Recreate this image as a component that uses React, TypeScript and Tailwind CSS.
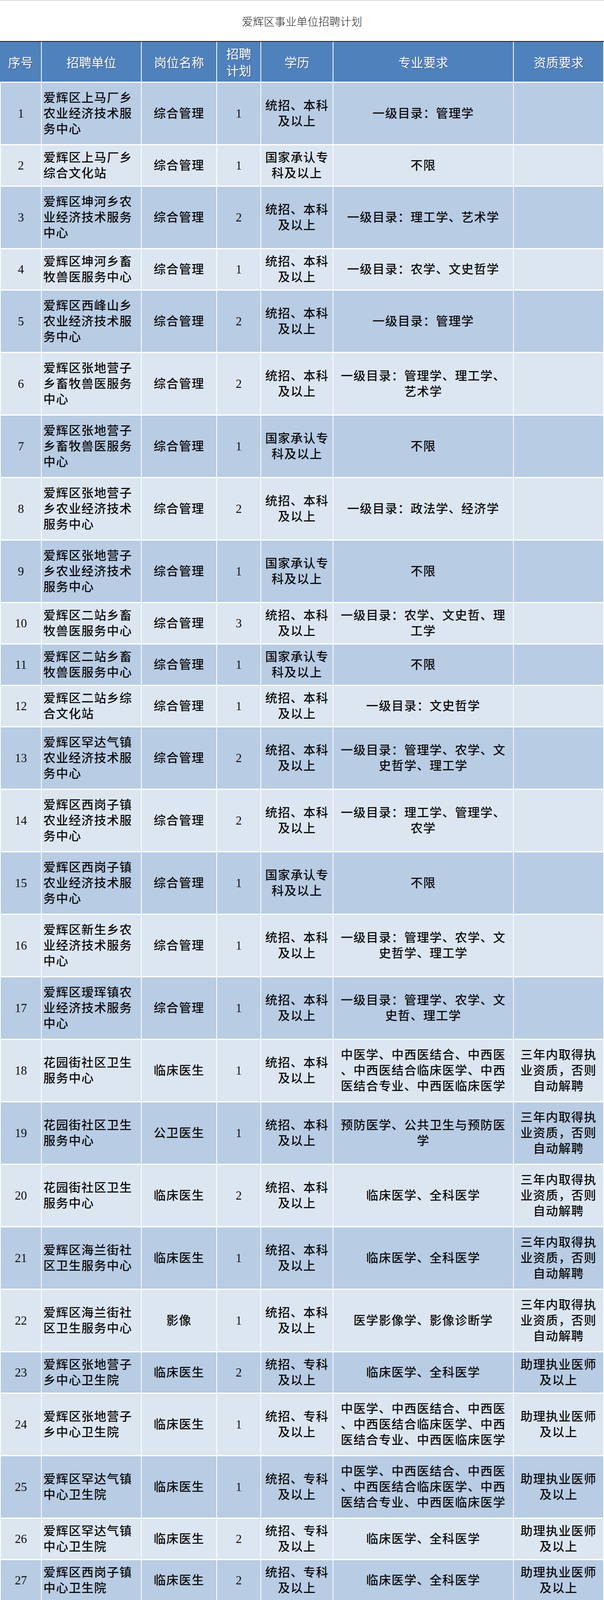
import React from "react";

type Row = {
  unit: string;
  post: string;
  num: number;
  edu: string[];
  major: string[];
  qual?: string[];
};

const BK = ["统招、本科", "及以上"];
const GJ = ["国家承认专", "科及以上"];
const ZK = ["统招、专科", "及以上"];
const ZY = ["中医学、中西医结合、中西医", "、中西医结合临床医学、中西", "医结合专业、中西医临床医学"];
const SN = ["三年内取得执", "业资质，否则", "自动解聘"];
const ZL = ["助理执业医师", "及以上"];
const LC = ["临床医学、全科医学"];

const rows: Row[] = [
  { unit: "爱辉区上马厂乡农业经济技术服务中心", post: "综合管理", num: 1, edu: BK, major: ["一级目录：管理学"] },
  { unit: "爱辉区上马厂乡综合文化站", post: "综合管理", num: 1, edu: GJ, major: ["不限"] },
  { unit: "爱辉区坤河乡农业经济技术服务中心", post: "综合管理", num: 2, edu: BK, major: ["一级目录：理工学、艺术学"] },
  { unit: "爱辉区坤河乡畜牧兽医服务中心", post: "综合管理", num: 1, edu: BK, major: ["一级目录：农学、文史哲学"] },
  { unit: "爱辉区西峰山乡农业经济技术服务中心", post: "综合管理", num: 2, edu: BK, major: ["一级目录：管理学"] },
  { unit: "爱辉区张地营子乡畜牧兽医服务中心", post: "综合管理", num: 2, edu: BK, major: ["一级目录：管理学、理工学、", "艺术学"] },
  { unit: "爱辉区张地营子乡畜牧兽医服务中心", post: "综合管理", num: 1, edu: GJ, major: ["不限"] },
  { unit: "爱辉区张地营子乡农业经济技术服务中心", post: "综合管理", num: 2, edu: BK, major: ["一级目录：政法学、经济学"] },
  { unit: "爱辉区张地营子乡农业经济技术服务中心", post: "综合管理", num: 1, edu: GJ, major: ["不限"] },
  { unit: "爱辉区二站乡畜牧兽医服务中心", post: "综合管理", num: 3, edu: BK, major: ["一级目录：农学、文史哲、理", "工学"] },
  { unit: "爱辉区二站乡畜牧兽医服务中心", post: "综合管理", num: 1, edu: GJ, major: ["不限"] },
  { unit: "爱辉区二站乡综合文化站", post: "综合管理", num: 1, edu: BK, major: ["一级目录：文史哲学"] },
  { unit: "爱辉区罕达气镇农业经济技术服务中心", post: "综合管理", num: 2, edu: BK, major: ["一级目录：管理学、农学、文", "史哲学、理工学"] },
  { unit: "爱辉区西岗子镇农业经济技术服务中心", post: "综合管理", num: 2, edu: BK, major: ["一级目录：理工学、管理学、", "农学"] },
  { unit: "爱辉区西岗子镇农业经济技术服务中心", post: "综合管理", num: 1, edu: GJ, major: ["不限"] },
  { unit: "爱辉区新生乡农业经济技术服务中心", post: "综合管理", num: 1, edu: BK, major: ["一级目录：管理学、农学、文", "史哲学、理工学"] },
  { unit: "爱辉区瑷珲镇农业经济技术服务中心", post: "综合管理", num: 1, edu: BK, major: ["一级目录：管理学、农学、文", "史哲、理工学"] },
  { unit: "花园街社区卫生服务中心", post: "临床医生", num: 1, edu: BK, major: ZY, qual: SN },
  { unit: "花园街社区卫生服务中心", post: "公卫医生", num: 1, edu: BK, major: ["预防医学、公共卫生与预防医", "学"], qual: SN },
  { unit: "花园街社区卫生服务中心", post: "临床医生", num: 2, edu: BK, major: LC, qual: SN },
  { unit: "爱辉区海兰街社区卫生服务中心", post: "临床医生", num: 1, edu: BK, major: LC, qual: SN },
  { unit: "爱辉区海兰街社区卫生服务中心", post: "影像", num: 1, edu: BK, major: ["医学影像学、影像诊断学"], qual: SN },
  { unit: "爱辉区张地营子乡中心卫生院", post: "临床医生", num: 2, edu: ZK, major: LC, qual: ZL },
  { unit: "爱辉区张地营子乡中心卫生院", post: "临床医生", num: 1, edu: ZK, major: ZY, qual: ZL },
  { unit: "爱辉区罕达气镇中心卫生院", post: "临床医生", num: 1, edu: ZK, major: ZY, qual: ZL },
  { unit: "爱辉区罕达气镇中心卫生院", post: "临床医生", num: 2, edu: ZK, major: LC, qual: ZL },
  { unit: "爱辉区西岗子镇中心卫生院", post: "临床医生", num: 2, edu: ZK, major: LC, qual: ZL },
  { unit: "爱辉区西岗子镇中心卫生院", post: "药剂", num: 1, edu: BK, major: ["药学、临床药学"] },
];

// unit names wrap every 7 characters in the sheet
function chunk(s: string, n: number) {
  const out: string[] = [];
  for (let i = 0; i < s.length; i += n) out.push(s.slice(i, i + n));
  return out;
}

function Lines({ lines }: { lines: string[] }) {
  return (
    <div>
      {lines.map((l, i) => (
        <div key={i} className="whitespace-nowrap">{l}</div>
      ))}
    </div>
  );
}

const cell = "flex items-center justify-center border-r-2 border-white text-center";

export default function App() {
  return (
    <div className="w-[1547px] bg-white text-[#0d0d0d] font-['Liberation_Serif','Noto_Sans_CJK_SC',serif]">
      <div className="flex h-[105px] items-center justify-center border-t-2 border-[#dcdcdc] font-['Noto_Sans_CJK_SC',sans-serif] text-[28px] font-light text-[#2a2a2a]">
        爱辉区事业单位招聘计划
      </div>

      <div className="flex h-[107px] border-t-2 border-b-[3px] border-t-[#1e1e1e] border-b-white bg-[#4f81bd] font-['Noto_Sans_CJK_SC',sans-serif] text-[32px] leading-[43px] text-white [text-shadow:1px_1px_1px_rgba(0,0,0,0.45)]">
        <div className={`${cell} w-[107px]`}>序号</div>
        <div className={`${cell} w-[256px]`}>招聘单位</div>
        <div className={`${cell} w-[193px]`}>岗位名称</div>
        <div className={`${cell} w-[113px]`}><Lines lines={["招聘", "计划"]} /></div>
        <div className={`${cell} w-[185px]`}>学历</div>
        <div className={`${cell} w-[462px]`}>专业要求</div>
        <div className={`${cell} w-[231px] border-r-0`}>资质要求</div>
      </div>

      {rows.map((r, i) => {
        const unit = chunk(r.unit, 7);
        const tall = Math.max(unit.length, r.major.length, r.qual?.length ?? 0) >= 3;
        return (
          <div
            key={i}
            className={`flex border-b-[3px] border-white text-[31px] font-medium leading-[40px] tracking-[1.5px] ${tall ? "h-[160px]" : "h-[106px]"} ${i % 2 === 0 ? "bg-[#b8cce4]" : "bg-[#dce6f1]"}`}
          >
            <div className={`${cell} w-[107px] border-l-2 font-normal tracking-normal`}>{i + 1}</div>
            <div className="flex w-[256px] items-center border-r-2 border-white pl-[4px]"><Lines lines={unit} /></div>
            <div className={`${cell} w-[193px]`}>{r.post}</div>
            <div className={`${cell} w-[113px] font-normal tracking-normal`}>{r.num}</div>
            <div className={`${cell} w-[185px]`}><Lines lines={r.edu} /></div>
            <div className={`${cell} w-[462px]`}><Lines lines={r.major} /></div>
            <div className={`${cell} w-[231px]`}>{r.qual && <Lines lines={r.qual} />}</div>
          </div>
        );
      })}
    </div>
  );
}
